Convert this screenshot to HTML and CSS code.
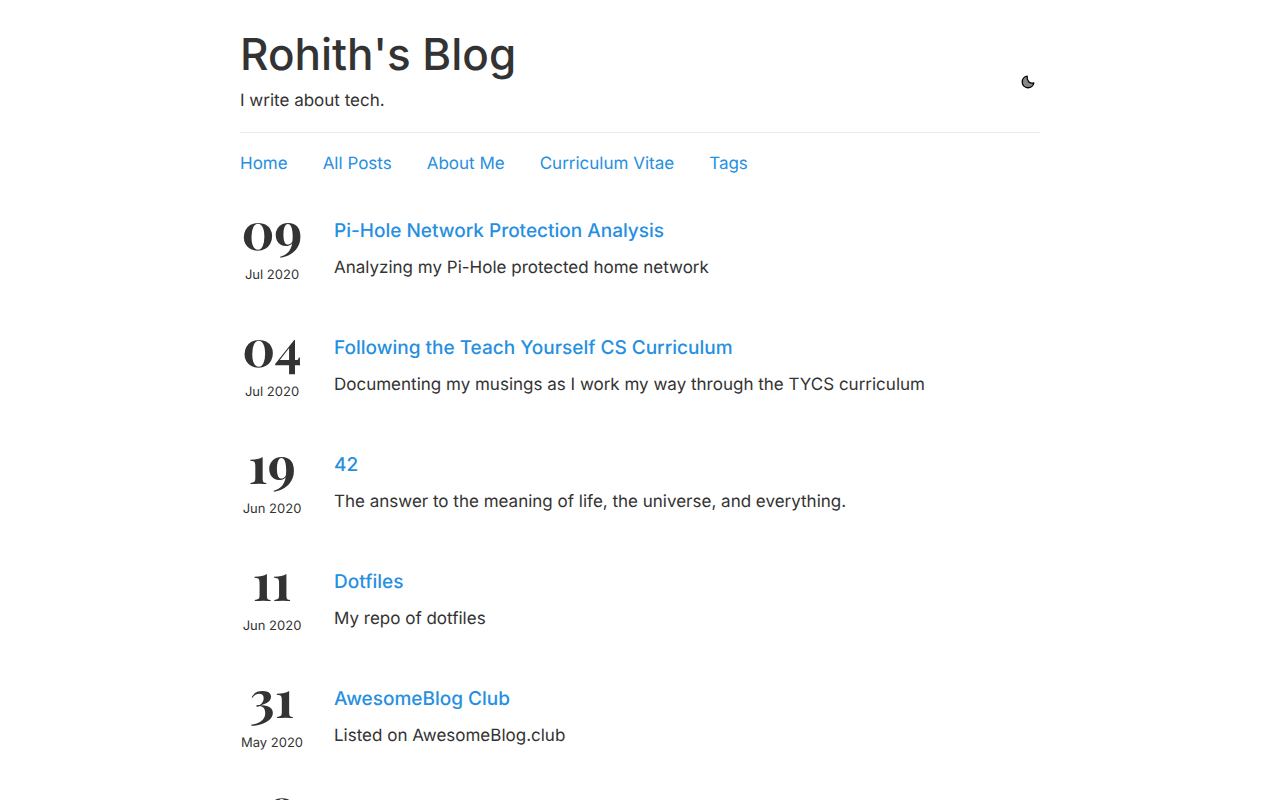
FILE: index.html
```html
<!DOCTYPE html>
<html lang="en">
<head>
<meta charset="utf-8">
<title>Rohith's Blog</title>
<link rel="stylesheet" href="styles.css">
</head>
<body>
<div class="container">
  <header class="masthead">
    <div>
      <h1 class="title">Rohith's Blog</h1>
      <p class="tagline">I write about tech.</p>
    </div>
    <button class="theme-toggle" type="button" aria-label="Toggle dark mode">
      <svg viewBox="0 0 24 24" width="14" height="14" aria-hidden="true"><path d="M10.500 2A10 10 0 1 0 22 13.500C15 15.500 9.500 10 10.500 2Z" fill="#888" stroke="#000" stroke-width="2.300" stroke-linejoin="round"/></svg>
    </button>
  </header>
  <nav class="nav">
    <a href="#">Home</a>
    <a href="#">All Posts</a>
    <a href="#">About Me</a>
    <a href="#">Curriculum Vitae</a>
    <a href="#">Tags</a>
  </nav>
  <main class="posts">
    <article class="post">
      <time class="date" datetime="2020-07-09"><span class="day">09</span><span class="month">Jul 2020</span></time>
      <div class="body"><h2 class="post-title"><a href="#">Pi-Hole Network Protection Analysis</a></h2><p class="summary">Analyzing my Pi-Hole protected home network</p></div>
    </article>
    <article class="post">
      <time class="date" datetime="2020-07-04"><span class="day">04</span><span class="month">Jul 2020</span></time>
      <div class="body"><h2 class="post-title"><a href="#">Following the Teach Yourself CS Curriculum</a></h2><p class="summary">Documenting my musings as I work my way through the TYCS curriculum</p></div>
    </article>
    <article class="post">
      <time class="date" datetime="2020-06-19"><span class="day">19</span><span class="month">Jun 2020</span></time>
      <div class="body"><h2 class="post-title"><a href="#">42</a></h2><p class="summary">The answer to the meaning of life, the universe, and everything.</p></div>
    </article>
    <article class="post">
      <time class="date" datetime="2020-06-11"><span class="day">11</span><span class="month">Jun 2020</span></time>
      <div class="body"><h2 class="post-title"><a href="#">Dotfiles</a></h2><p class="summary">My repo of dotfiles</p></div>
    </article>
    <article class="post">
      <time class="date" datetime="2020-05-31"><span class="day">31</span><span class="month">May 2020</span></time>
      <div class="body"><h2 class="post-title"><a href="#">AwesomeBlog Club</a></h2><p class="summary">Listed on AwesomeBlog.club</p></div>
    </article>
    <article class="post">
      <time class="date" datetime="2020-05-18"><span class="day">18</span></time>
    </article>
  </main>
</div>
</body>
</html>
```
FILE: styles.css
```css
* { box-sizing: border-box; }
body { margin: 0; background: #fff; color: #333; font: 400 17px/30px Inter, sans-serif; text-rendering: geometricPrecision; }
h1, h2, p { margin: 0; font-weight: 500; }
p { font-weight: 400; }
a { color: #268fdf; text-decoration: none; }
.container { max-width: 800px; margin: 0 auto; padding-top: 24px; }
.masthead { display: flex; align-items: center; justify-content: space-between; padding-bottom: 16px; border-bottom: 1px solid #ebebeb; }
.title { padding-bottom: 2px; font-size: 44px; line-height: 60px; }
.theme-toggle { display: flex; padding: 5px; margin-top: 24px; border: 0; background: none; cursor: pointer; }
.nav { display: flex; flex-wrap: wrap; gap: 35px; padding: 16px 0; }
.posts { padding-top: 14px; }
.post { display: flex; gap: 30px; padding-bottom: 39px; }
.date { display: flex; flex-direction: column; gap: 14px; flex: none; width: 64px; text-align: center; }
.day { font: 700 51px/40px "Playfair Display", "Liberation Serif", serif; }
.month { font-size: 13px; line-height: 24px; }
.post-title { font-size: 19px; line-height: 44px; }
```
